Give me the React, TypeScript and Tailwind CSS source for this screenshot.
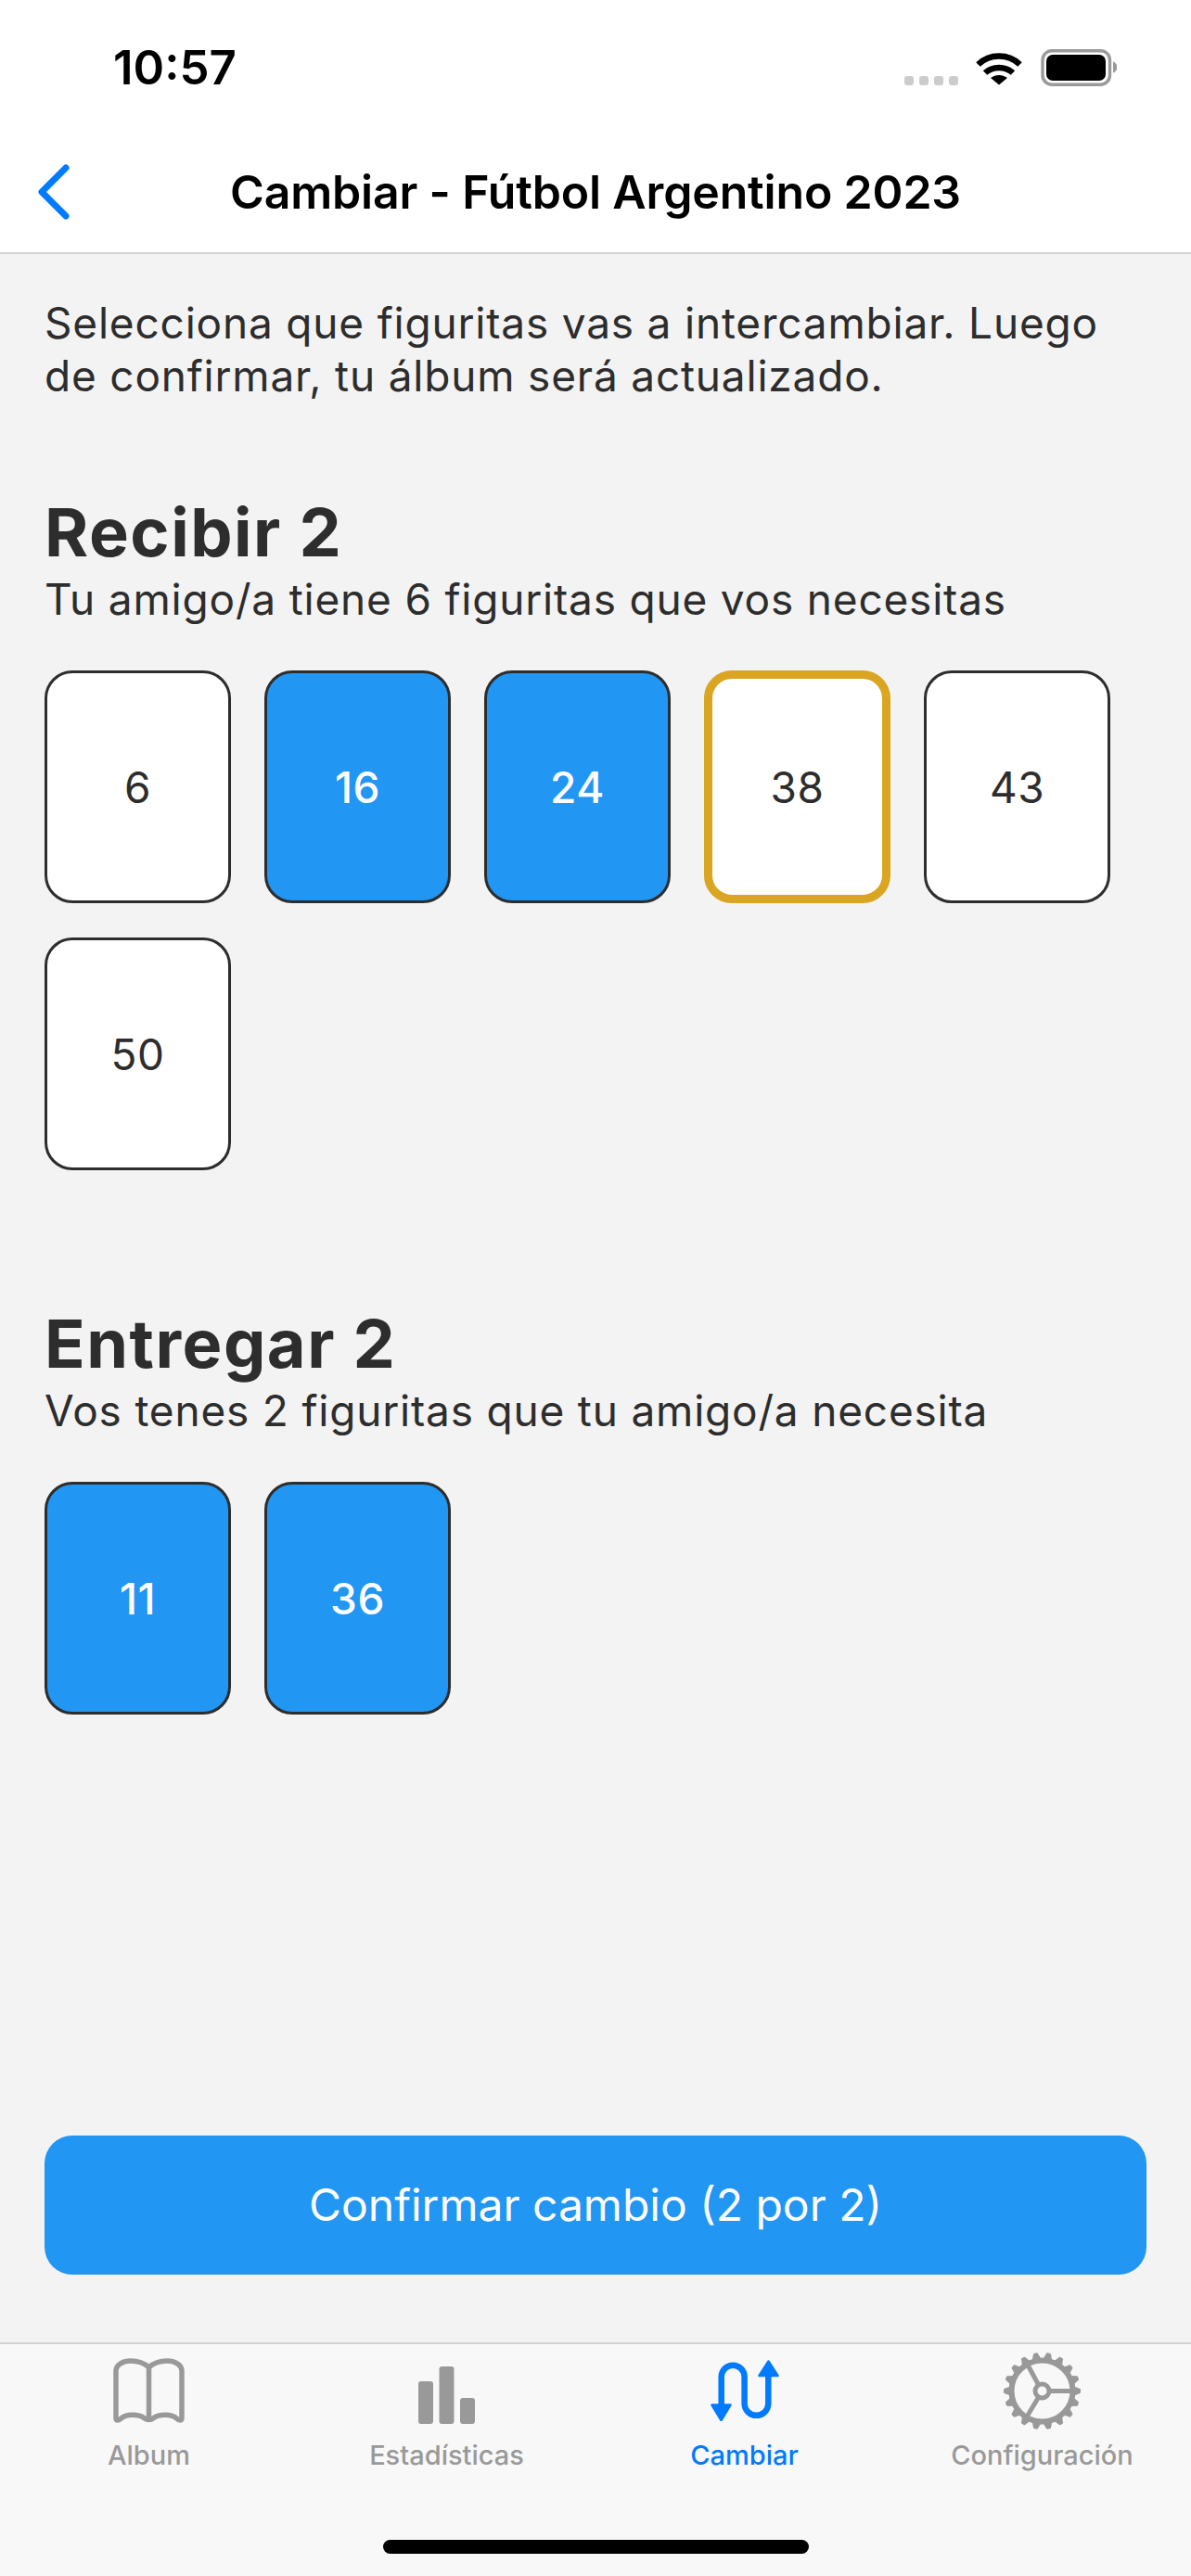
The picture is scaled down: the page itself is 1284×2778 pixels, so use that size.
type CardState = 'idle' | 'selected' | 'highlight'

type Card = {
  number: number;
  state: CardState;
}

const receiveCards: Card[] = [
  { number: 6, state: 'idle' },
  { number: 16, state: 'selected' },
  { number: 24, state: 'selected' },
  { number: 38, state: 'highlight' },
  { number: 43, state: 'idle' },
  { number: 50, state: 'idle' },
]

const giveCards: Card[] = [
  { number: 11, state: 'selected' },
  { number: 36, state: 'selected' },
]

function StickerCard({ card }: { card: Card }) {
  const stateClass = {
    idle: 'bg-white border-[3px] border-[#2d2d2d] text-[#2d2d2d]',
    selected: 'bg-[#2196f3] border-[3px] border-[#2d2d2d] font-medium text-white',
    highlight: 'bg-white border-[9px] border-[#daa520] text-[#2d2d2d]',
  }[card.state]

  return (
    <div className={`flex h-[251px] w-[201px] items-center justify-center rounded-[30px] text-[46px] leading-none tracking-[0.5px] ${stateClass}`}>
      {card.number}
    </div>
  )
}

function CardSection({ title, subtitle, cards, className }: { title: string; subtitle: string; cards: Card[]; className: string }) {
  return (
    <section className={className}>
      <h2 className="h-[84px] text-[72px] font-bold leading-[84px] tracking-[1.5px] text-[#2d2d2d]">{title}</h2>
      <p className="h-[60px] text-[46px] leading-[60px] tracking-[0.8px] text-[#2d2d2d]">{subtitle}</p>
      <div className="mt-[47px] flex flex-wrap gap-x-[36px] gap-y-[37px]">
        {cards.map((card) => (
          <StickerCard key={card.number} card={card} />
        ))}
      </div>
    </section>
  )
}

function StatusIcons() {
  return (
    <svg width="232" height="42" viewBox="0 0 232 42" className="block">
      <g fill="#cccccc">
        <rect x="3" y="29" width="10" height="10" rx="3" />
        <rect x="19" y="29" width="10" height="10" rx="3" />
        <rect x="35" y="29" width="10" height="10" rx="3" />
        <rect x="51" y="29" width="10" height="10" rx="3" />
      </g>
      <g fill="none" stroke="#000" strokeWidth="6.5">
        <path d="M82.5 16.5C95 4.5 115 4.5 127.5 16.5" />
        <path d="M90 25.5C98 18 112 18 120 25.5" />
      </g>
      <path d="M105 38.5L96 31C101.5 27 108.5 27 114 31Z" fill="#000" />
      <rect x="152" y="1.7" width="72.5" height="36.5" rx="10" fill="none" stroke="#9a9a9a" strokeWidth="3.4" />
      <rect x="156" y="6" width="64" height="28" rx="7" fill="#000" />
      <path d="M228 13.5C231 14.5 232.5 17 232.5 19.5C232.5 22 231 24.5 228 25.5Z" fill="#9a9a9a" />
    </svg>
  )
}

function BookIcon() {
  return (
    <svg width="77" height="70" viewBox="0 0 77 70" fill="none" stroke="#999999" strokeWidth="5.5" strokeLinejoin="round" strokeLinecap="round">
      <path d="M38.5 10C33 5 26 3 19 3C11 3 3 7 3 14V65C3 68 6 67 8 65.5C14 60 27 60 34 65C36.500 67 40.500 67 43 65C50 60 63 60 69 65.5C71 67 74 68 74 65V14C74 7 66 3 58 3C51 3 44 5 38.500 10ZM38.500 10V64" />
    </svg>
  )
}

function StatsIcon() {
  return (
    <svg width="61" height="62" viewBox="0 0 61 62" fill="#999999" className="mt-[10px]">
      <rect x="0" y="16" width="16" height="46" rx="3" />
      <rect x="22.500" y="0" width="16" height="62" rx="3" />
      <rect x="45" y="34" width="16" height="28" rx="3" />
    </svg>
  )
}

function SwapIcon() {
  return (
    <svg width="74" height="66" viewBox="0 0 74 66">
      <path d="M11.700 50V18.200A12.450 12.450 0 0 1 36.600 18.200V47A12.850 12.850 0 0 0 62.300 47V15" fill="none" stroke="#007aff" strokeWidth="6.500" />
      <path d="M1.500 48.500H21.500L11.500 65Z" fill="#007aff" stroke="#007aff" strokeWidth="2.500" strokeLinejoin="round" />
      <path d="M52.500 17H72.500L62.500 1.500Z" fill="#007aff" stroke="#007aff" strokeWidth="2.500" strokeLinejoin="round" />
    </svg>
  )
}

function GearIcon() {
  const teeth = Array.from({ length: 18 }, (_, i) => i * 20 + 10)

  return (
    <svg width="85" height="85" viewBox="-42.500 -42.500 85 85" fill="none" stroke="#999999">
      <circle r="33" strokeWidth="6" />
      {teeth.map((angle) => (
        <path key={angle} d="M-4 -34H4L1.500 -40.500H-1.500Z" fill="#999999" strokeWidth="2" strokeLinejoin="round" transform={`rotate(${angle})`} />
      ))}
      <circle r="7.500" strokeWidth="5" />
      <path d="M9 0H32M-4.500 -7.800L-16 -29M-4.500 7.800L-17 28.500" strokeWidth="5" />
    </svg>
  )
}

function TabItem({ label, active, icon }: { label: string; active?: boolean; icon: React.ReactNode }) {
  return (
    <div className="flex flex-col items-center">
      <div className="flex h-[100px] w-full items-center justify-center">{icon}</div>
      <span className={`mt-[2px] text-[29px] leading-[36px] font-medium ${active ? 'text-[#007aff]' : 'text-[#999999]'}`}>
        {label}
      </span>
    </div>
  )
}

export default function App() {
  return (
    <div className="flex h-[2778px] w-[1284px] flex-col overflow-hidden bg-[#f3f3f3] font-[Inter,sans-serif]">
      <header className="h-[274px] shrink-0 border-b-[2px] border-[#d3d3d3] bg-white">
        <div className="flex h-[142px] items-start justify-between pl-[122px] pr-[80px] pt-[48px]">
          <span className="text-[51px] font-semibold leading-[50px] text-black">10:57</span>
          <div className="pt-[5px]">
            <StatusIcons />
          </div>
        </div>
        <div className="grid h-[130px] grid-cols-[120px_1fr_120px] items-center">
          <svg width="36" height="60" viewBox="0 0 36 60" fill="none" stroke="#007aff" strokeWidth="7" strokeLinecap="round" strokeLinejoin="round" className="ml-[40px]">
            <path d="M31 4L5 30L31 56" />
          </svg>
          <h1 className="text-center text-[50px] font-semibold leading-[60px] tracking-[-0.17px] text-black">Cambiar - Fútbol Argentino 2023</h1>
        </div>
      </header>

      <main className="flex-1 px-[48px] pt-[46px]">
        <p className="text-[46px] leading-[57px] tracking-[0.8px] text-[#2d2d2d]">
          Selecciona que figuritas vas a intercambiar. Luego
          <br />
          de confirmar, tu álbum será actualizado.
        </p>
        <CardSection
          className="mt-[98px]"
          title="Recibir 2"
          subtitle="Tu amigo/a tiene 6 figuritas que vos necesitas"
          cards={receiveCards}
        />
        <CardSection
          className="mt-[145px]"
          title="Entregar 2"
          subtitle="Vos tenes 2 figuritas que tu amigo/a necesita"
          cards={giveCards}
        />
        <button className="mt-[454px] flex h-[150px] w-full items-center justify-center rounded-[30px] bg-[#2196f3] text-[48px] text-white">
          Confirmar cambio (2 por 2)
        </button>
      </main>

      <footer className="relative h-[252px] shrink-0 border-t-[2px] border-[#d3d3d3] bg-[#f8f8f8]">
        <div className="grid grid-cols-4">
          <TabItem label="Album" icon={<BookIcon />} />
          <TabItem label="Estadísticas" icon={<StatsIcon />} />
          <TabItem label="Cambiar" active icon={<SwapIcon />} />
          <TabItem label="Configuración" icon={<GearIcon />} />
        </div>
        <div className="absolute bottom-[24px] left-[413px] h-[15px] w-[459px] rounded-full bg-black" />
      </footer>
    </div>
  )
}
